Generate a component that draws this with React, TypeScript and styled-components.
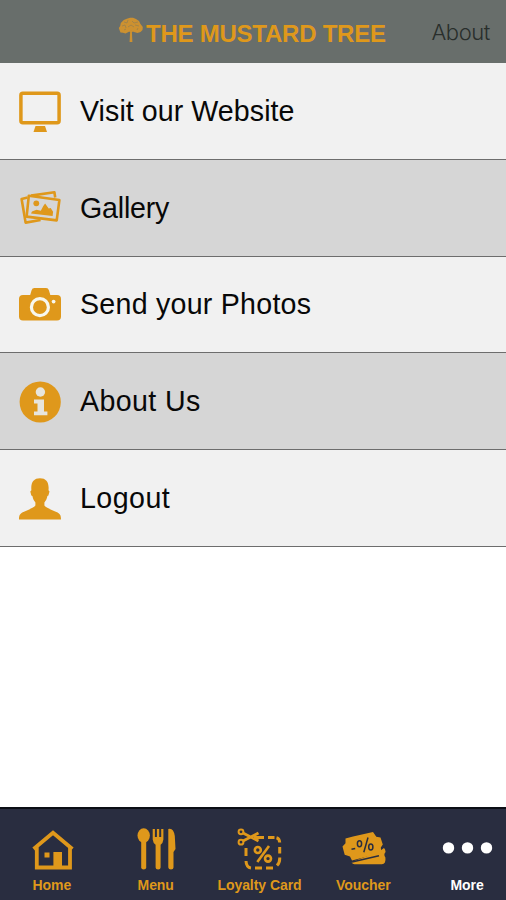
import React from "react";
import styled, { createGlobalStyle } from "styled-components";

const gold = "#df981b";
const navy = "#292d40";

const GlobalStyle = createGlobalStyle`
  * { box-sizing: border-box; }
  body { margin: 0; background: #fff; font-family: "Liberation Sans", Arial, sans-serif; }
`;

const Screen = styled.div`
  display: flex;
  flex-direction: column;
  width: 506px;
  height: 900px;
  overflow: hidden;
  background: #fff;
`;

const Header = styled.header`
  display: grid;
  grid-template-columns: 118px 1fr auto;
  height: 63px;
  flex: none;
  padding: 0 16px 0 0;
  background: #686e6b;
`;

const Brand = styled.div`
  grid-column: 2;
  display: flex;
  align-items: flex-start;
  padding-top: 17px;
  svg { flex: none; }
`;

const BrandName = styled.h1`
  margin: 3px 0 0 1px;
  font-size: 24px;
  line-height: 28px;
  font-weight: 700;
  letter-spacing: -0.24px;
  white-space: nowrap;
  color: ${gold};
`;

const AboutLink = styled.a`
  padding-top: 18px;
  font-family: Inter, "Liberation Sans", sans-serif;
  font-weight: 300;
  font-size: 22px;
  line-height: 28px;
  letter-spacing: -0.4px;
  color: #292e2c;
`;

const List = styled.nav`
  display: grid;
  grid-template-rows: repeat(5, 96.75px);
  flex: none;
`;

const Row = styled.a<{ $shaded?: boolean }>`
  display: flex;
  align-items: center;
  padding-left: 18px;
  gap: 18px;
  border-bottom: 1.5px solid #6d6d6d;
  background: ${(p) => (p.$shaded ? "#d6d6d6" : "#f1f1f1")};
  svg { flex: none; }
`;

const RowLabel = styled.span<{ $tracking: number }>`
  font-size: 28.6px;
  line-height: 32px;
  letter-spacing: ${(p) => p.$tracking}px;
  color: #080808;
`;

const TabBar = styled.nav`
  display: grid;
  grid-template-columns: repeat(5, 103.8px);
  height: 93px;
  flex: none;
  margin-top: auto;
  border-top: 2px solid #0c0e16;
  background: ${navy};
`;

const Tab = styled.a<{ $active?: boolean }>`
  display: flex;
  flex-direction: column;
  align-items: center;
  padding-top: 17px;
  color: ${(p) => (p.$active ? "#fff" : gold)};
`;

const TabLabel = styled.span`
  margin-top: 3px;
  font-size: 14px;
  line-height: 16px;
  font-weight: 700;
  letter-spacing: -0.05px;
  white-space: nowrap;
`;

const TreeIcon = () => (
  <svg width="27" height="27" viewBox="0 0 27 27" fill="#cd9130">
    <path d="M12.2 13h1.6l.6 12h-2.8z" />
    <path d="M13 15l-5-4M13 15l6-4" stroke="#cd9130" strokeWidth="1.2" fill="none" />
    <path d="M12 .8l3 0 3 1.2 3 2 1.5 3 2.3 3-.3 3-2 2-3 1-3.5-1-3-1.4-2.5 1.4-3 1.6-2.5-.8-2.5-.3L1.5 13l-.7-2 1.4-2 .6-3 3-3 3-1.3z" />
    <path d="M4 9l3-1 1 3M6 5l3 1 1-3M10 10l3-2 3 2M14 4l2 2 4-1M17 8l4 1M6 13l2-1M19 13l1-2" stroke="#8a7c55" strokeWidth=".6" fill="none" />
  </svg>
);

const MonitorIcon = () => (
  <svg width="44" height="44" viewBox="0 0 44 44">
    <rect x="2.9" y="4.2" width="38.2" height="29.5" rx="2" fill="none" stroke={gold} strokeWidth="3.5" />
    <path d="M17.5 37h9.5l2 6H15.5z" fill={gold} />
  </svg>
);

const GalleryIcon = () => (
  <svg width="44" height="44" viewBox="0 0 44 44" fill="none" stroke={gold} strokeWidth="2.6" strokeLinejoin="round">
    <path d="M9.6 11.6L3.6 13l4 23.6 15-2.6" />
    <path d="M13 9.6l23.4-3.3.8 5.2" />
    <path d="M10.8 9.8L41.4 14l-2.7 20.4L8.6 30.6z" />
    <circle cx="18.3" cy="17.3" r="2.9" fill={gold} stroke="none" />
    <path d="M13 27.6l1-2.2 4.5-1.6 4.3 1 2.5-4.8 1.8-2.6 3.6 5.2 2-.7 2.4 3.8-.5 4.4z" fill={gold} stroke="none" />
  </svg>
);

const CameraIcon = () => (
  <svg width="44" height="44" viewBox="0 0 44 44">
    <path d="M5 13h7.2l1.3-4.6q.7-2.4 3-2.4h11.5q2.3 0 3 2.4l1.3 4.6H39q4 0 4 4v17.5q0 4-4 4H5q-4 0-4-4V17q0-4 4-4z" fill={gold} />
    <circle cx="21.9" cy="25.2" r="8.5" fill="none" stroke="#f7f7ef" strokeWidth="3.2" />
    <circle cx="35.6" cy="19.6" r="1.9" fill="#f7f7ef" />
  </svg>
);

const InfoIcon = () => (
  <svg width="44" height="44" viewBox="0 0 44 44">
    <circle cx="22.2" cy="23" r="20.6" fill={gold} />
    <circle cx="22.4" cy="13" r="4.7" fill="#e7e5dd" />
    <path d="M16 20.6h10v11.8h3.4v3.9H16v-3.9h3.5v-8H16z" fill="#e7e5dd" />
  </svg>
);

const PersonIcon = () => (
  <svg width="44" height="44" viewBox="0 0 44 44">
    <path d="M22 2.2c6.4 0 9.3 4.2 8.5 12l1 1.2-1.1 4-1 .7c-.6 3-1.5 4.8-3 6.3v3.2c1.8 2.4 7.2 4.2 12 6.4C42 37.6 43 39 43 43.6H1c0-4.6 1-6 4.4-7.6 4.8-2.2 10.2-4 12-6.4v-3.2c-1.5-1.5-2.4-3.3-3-6.3l-1.1-.7-1-4 1.1-1.2C12.6 6.4 15.6 2.2 22 2.2z" fill={gold} />
  </svg>
);

const HomeIcon = () => (
  <svg width="48" height="48" viewBox="0 0 48 48" fill="none" stroke={gold}>
    <path d="M5.6 23L25 6.8 44.4 23M8.8 21v20.5h33.2V21" strokeWidth="3.8" strokeLinejoin="miter" />
    <path d="M25.4 26h8.6v16h-8.600zM16.5 26.500h5v5h-5z" fill={gold} stroke="none" />
  </svg>
);

const CutleryIcon = () => (
  <svg width="48" height="48" viewBox="0 0 48 48" fill={gold}>
    <ellipse cx="11.7" cy="9.600" rx="6.200" ry="7.300" />
    <path d="M9.200 15h5v26.500q0 2-2.500 2t-2.500-2z" />
    <path d="M20.700 3h2.200v8h2V3h2.300v8h2V3h2.200v10.500q-.5 4-2.800 5.300v22.700q0 2-2.500 2t-2.500-2V18.800q-2.400-1.300-2.900-5.300z" />
    <path d="M36.300 41.500V3q5.200-1.500 6.500 7l.7 13-2 3v15.500q0 2-2.500 2t-2.700-2z" />
  </svg>
);

const CouponIcon = () => (
  <svg width="48" height="48" viewBox="0 0 48 48" fill="none" stroke={gold}>
    <circle cx="6" cy="5.800" r="2.400" strokeWidth="2" />
    <circle cx="6" cy="16.200" r="2.400" strokeWidth="2" />
    <path d="M8 7l15.500 8M8 15l15.500-8" strokeWidth="2.800" />
    <path d="M19 11.500h10M33 11.500h6.500M41.500 11.700q3 .8 3.200 4.800M44.700 21v6.500M44.700 31.500q.3 5-2.700 8M38 42h-7M27 42h-7M16 42q-4.700-.5-5-7M11 30v-8" strokeWidth="3" />
    <circle cx="22.800" cy="24" r="3" strokeWidth="2.600" />
    <circle cx="33" cy="32.600" r="3" strokeWidth="2.600" />
    <path d="M34 20L22.300 36" strokeWidth="2.600" />
  </svg>
);

const VoucherIcon = () => (
  <svg width="48" height="48" viewBox="0 0 48 48">
    <path d="M40 25.500l5-3.500q1.300 1 1.600 4-2.400 2.600-.2 5.500.4 3-.5 5-1 1.700-3 1.700H15.500q-2.200 0-2.800-2.200z" fill={gold} />
    <path d="M6.500 12.500l7.500-2 20-4.500 3.300 4.700 4.200.8 2.300 7-2 3 .6 5.200L13 34.500l-2-4-5.300-1.700L3.500 20.500l3-3.200z" fill={gold} />
    <path d="M13 36l27-6.300" stroke={navy} strokeWidth="1.500" />
    <g fill="none" stroke={navy} strokeWidth="1.500">
      <path d="M12.500 23.200l3.700-.8M24.800 26.300l4.200-14.800" />
      <ellipse cx="20.500" cy="17.800" rx="2.100" ry="3" />
      <ellipse cx="31.800" cy="21" rx="2.100" ry="3" />
    </g>
  </svg>
);

const MoreIcon = () => (
  <svg width="56" height="48" viewBox="0 0 56 48" fill="#fff">
    <circle cx="9.500" cy="21.900" r="5.700" />
    <circle cx="28.500" cy="21.900" r="5.700" />
    <circle cx="47.500" cy="21.900" r="5.700" />
  </svg>
);

const rows = [
  { label: "Visit our Website", Icon: MonitorIcon, tracking: 0.06 },
  { label: "Gallery", Icon: GalleryIcon, tracking: -0.2 },
  { label: "Send your Photos", Icon: CameraIcon, tracking: 0.25 },
  { label: "About Us", Icon: InfoIcon, tracking: 0.38 },
  { label: "Logout", Icon: PersonIcon, tracking: 0.45 },
];

const tabs = [
  { label: "Home", Icon: HomeIcon },
  { label: "Menu", Icon: CutleryIcon },
  { label: "Loyalty Card", Icon: CouponIcon },
  { label: "Voucher", Icon: VoucherIcon },
  { label: "More", Icon: MoreIcon, active: true },
];

export default function App() {
  return (
    <Screen>
      <GlobalStyle />
      <Header>
        <Brand>
          <TreeIcon />
          <BrandName>THE MUSTARD TREE</BrandName>
        </Brand>
        <AboutLink>About</AboutLink>
      </Header>
      <List>
        {rows.map(({ label, Icon, tracking }, i) => (
          <Row key={label} $shaded={i % 2 === 1}>
            <Icon />
            <RowLabel $tracking={tracking}>{label}</RowLabel>
          </Row>
        ))}
      </List>
      <TabBar>
        {tabs.map(({ label, Icon, active }) => (
          <Tab key={label} $active={active}>
            <Icon />
            <TabLabel>{label}</TabLabel>
          </Tab>
        ))}
      </TabBar>
    </Screen>
  );
}
